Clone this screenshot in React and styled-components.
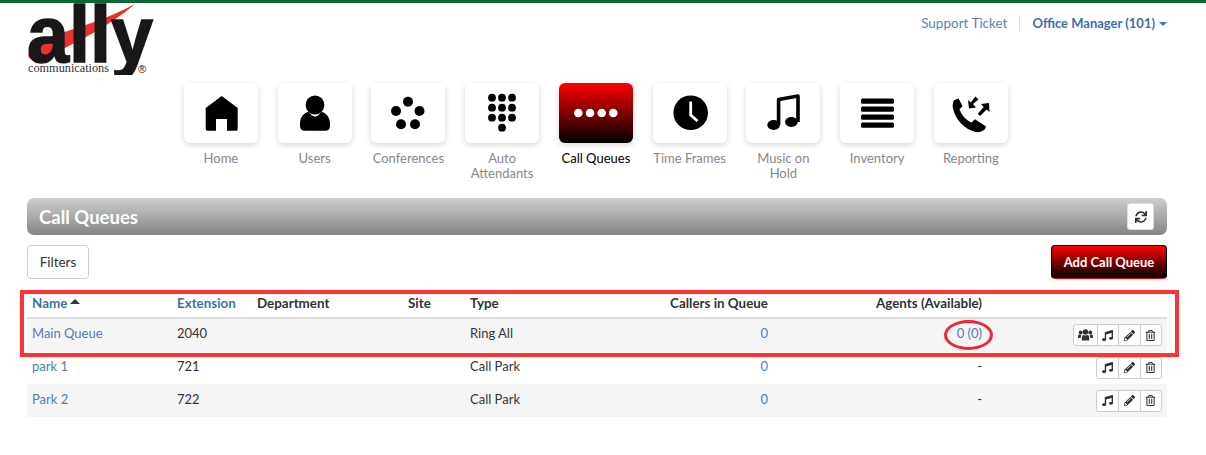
import React from "react";
import styled, { createGlobalStyle } from "styled-components";
import { FaMusic, FaPencilAlt, FaRegTrashAlt, FaSync } from "react-icons/fa";

const GlobalStyle = createGlobalStyle`
  html, body { margin: 0; padding: 0; background: #fff; }
  body { font-family: "Lato", "Noto Sans", sans-serif; font-size: 13px; color: #333; }
  * { box-sizing: border-box; }
`;

const navItems = [
  { label: "Home", icon: "home" },
  { label: "Users", icon: "users" },
  { label: "Conferences", icon: "conferences" },
  { label: "Auto Attendants", icon: "dialpad" },
  { label: "Call Queues", icon: "queues", active: true },
  { label: "Time Frames", icon: "clock" },
  { label: "Music on Hold", icon: "music" },
  { label: "Inventory", icon: "inventory" },
  { label: "Reporting", icon: "reporting" },
];

const queues = [
  { name: "Main Queue", extension: "2040", type: "Ring All", callers: "0", agents: "0 (0)", hasAgents: true },
  { name: "park 1", extension: "721", type: "Call Park", callers: "0", agents: "-" },
  { name: "Park 2", extension: "722", type: "Call Park", callers: "0", agents: "-" },
];

const dots = (points, r, fill = "#000") =>
  points.map(([cx, cy]) => <circle key={`${cx}-${cy}`} cx={cx} cy={cy} r={r} fill={fill} />);

const tileIcons = {
  home: <path d="M37.7 13 L53.7 25 V46 Q53.7 47.7 52 47.7 H43 V36 H32 V47.7 H23.4 Q21.7 47.7 21.7 46 V25 Z" />,
  users: (
    <>
      <circle cx="37" cy="22" r="9.4" />
      <path d="M22 41 C22 34 26 29.5 31 29 C33 32 35 33.5 37 33.5 C39 33.5 41 32 43 29 C48 29.5 52 34 52 41 V43 Q52 47.7 47 47.7 H27 Q22 47.7 22 43 Z" />
    </>
  ),
  conferences: dots([[37, 18.7], [25, 28], [48.5, 28], [30, 41.3], [44, 41.3]], 5),
  dialpad: dots(
    [[27, 14.7], [37, 14.7], [47, 14.7], [27, 24.7], [37, 24.7], [47, 24.7], [27, 34.7], [37, 34.7], [47, 34.7], [37, 44.7]],
    3.9
  ),
  queues: dots([[19.3, 30], [31, 30], [42.7, 30], [54.3, 30]], 4.3, "#fff"),
  clock: (
    <>
      <circle cx="37.7" cy="29.8" r="17.3" />
      <path d="M37.7 18.5 V32 L44.5 38" fill="none" stroke="#fff" strokeWidth="2.8" />
    </>
  ),
  music: (
    <>
      <ellipse cx="27.6" cy="42" rx="6.3" ry="5" />
      <ellipse cx="45.4" cy="39" rx="6.3" ry="5" />
      <path d="M32.6 42 V16.5 L52 13 V39" fill="none" stroke="#000" strokeWidth="3.6" strokeLinejoin="round" />
    </>
  ),
  inventory: (
    <>
      <rect x="21" y="15.5" width="33" height="5.2" rx="1.5" />
      <rect x="21" y="23.5" width="33" height="5.2" rx="1.5" />
      <rect x="21" y="31.5" width="33" height="5.2" rx="1.5" />
      <rect x="21" y="39.5" width="33" height="5.2" rx="1.5" />
    </>
  ),
  reporting: (
    <>
      <path d="M20.5 17 L24.5 15.5 L28.5 23 L25.5 26.5 C27.5 32 32 37 37.5 39.5 L41 36.2 L52 43.5 L51 46 C49 48.5 45 49.5 42 49 C31 46.5 21 37 18.8 24.5 C18.4 21 19 18.5 20.5 17 Z" />
      <path d="M35 25.5 L34 17 L36.7 19.4 L41.5 13.5 L44.5 16.5 L39 21 L42 24.5 Z" />
      <path d="M55 20 L55.5 29 L52.7 26.4 L46 33 L43.7 30.7 L49.7 24 L47 21 Z" />
    </>
  ),
};

const Logo = () => (
  <LogoSvg viewBox="0 0 127 72" aria-label="ally communications">
    <path d="M108 1 C 84 14, 54 24, 28 32 C 10 38, 0 46, 1.5 54 C 5 59, 14 57, 24 52 C 52 38, 84 22, 108 1 Z" fill="#e8322c" />
    <LogoWord x="0" y="59" textLength="126" lengthAdjust="spacingAndGlyphs">ally</LogoWord>
    <LogoTagline x="1" y="69" textLength="81" lengthAdjust="spacingAndGlyphs">communications</LogoTagline>
    <LogoMark x="111" y="70">®</LogoMark>
  </LogoSvg>
);

const GroupIcon = () => (
  <svg width="15" height="12" viewBox="0 0 15 12" fill="#333">
    <circle cx="7.5" cy="3" r="2.7" />
    <circle cx="2.7" cy="3.4" r="2" />
    <circle cx="12.3" cy="3.4" r="2" />
    <path d="M3.8 11.5 V8.5 C3.8 6.6 5 6 6 6 Q7.5 7 9 6 C10 6 11.2 6.6 11.2 8.5 V11.5 Z" />
    <path d="M0 9 V7.2 C0 6 .9 5.6 1.6 5.6 Q2.6 6.2 3.4 5.9 C3 6.6 2.8 7.5 2.8 9 Z" />
    <path d="M15 9 V7.2 C15 6 14.1 5.6 13.4 5.6 Q12.4 6.2 11.6 5.9 C12 6.6 12.2 7.5 12.2 9 Z" />
  </svg>
);

const App = () => (
  <Page>
    <GlobalStyle />
    <Header>
      <Logo />
      <UserLinks>
        <SupportLink>Support Ticket</SupportLink>
        <LinkDivider />
        <ManagerLink>Office Manager (101)</ManagerLink>
        <DownCaret />
      </UserLinks>
    </Header>

    <Nav>
      {navItems.map((item) => (
        <NavItem key={item.label}>
          <Tile $active={item.active}>
            <TileSvg viewBox="0 0 74 60">{tileIcons[item.icon]}</TileSvg>
          </Tile>
          <NavLabel $active={item.active}>{item.label}</NavLabel>
        </NavItem>
      ))}
    </Nav>

    <TitleBar>
      <Title>Call Queues</Title>
      <RefreshButton>
        <FaSync />
      </RefreshButton>
    </TitleBar>

    <Toolbar>
      <FilterButton>Filters</FilterButton>
      <AddButton>Add Call Queue</AddButton>
    </Toolbar>

    <TableWrap>
      <HeadRow>
        <HeadLink>
          Name
          <UpCaret />
        </HeadLink>
        <HeadLink>Extension</HeadLink>
        <HeadCell>Department</HeadCell>
        <HeadCell>Site</HeadCell>
        <HeadCell>Type</HeadCell>
        <HeadCell $right>Callers in Queue</HeadCell>
        <HeadCell $right>Agents (Available)</HeadCell>
        <HeadCell />
      </HeadRow>
      {queues.map((queue, index) => (
        <Row key={queue.name} $striped={index % 2 === 0}>
          <Cell>
            <RowLink>{queue.name}</RowLink>
          </Cell>
          <Cell>{queue.extension}</Cell>
          <Cell />
          <Cell />
          <Cell>{queue.type}</Cell>
          <RightCell>
            <RowLink>{queue.callers}</RowLink>
          </RightCell>
          <RightCell>{queue.hasAgents ? <RowLink>{queue.agents}</RowLink> : queue.agents}</RightCell>
          <ActionCell>
            <ActionGroup>
              {queue.hasAgents && (
                <ActionButton $wide>
                  <GroupIcon />
                </ActionButton>
              )}
              <ActionButton>
                <FaMusic />
              </ActionButton>
              <ActionButton>
                <FaPencilAlt />
              </ActionButton>
              <ActionButton>
                <FaRegTrashAlt />
              </ActionButton>
            </ActionGroup>
          </ActionCell>
        </Row>
      ))}
      <HighlightBox />
      <HighlightOval />
    </TableWrap>
  </Page>
);

const Page = styled.div`
  width: 1206px;
  height: 455px;
  padding: 0 39px 0 27px;
  border-top: 3px solid #0b6534;
  overflow: hidden;
`;

const Header = styled.header`
  display: flex;
  justify-content: space-between;
  align-items: flex-start;
  height: 80px;
`;

const LogoSvg = styled.svg`
  width: 127px;
  height: 72px;
  display: block;
`;

const LogoWord = styled.text`
  font-family: "Liberation Sans", sans-serif;
  font-weight: 700;
  font-size: 80px;
  fill: #1a1718;
  stroke: #1a1718;
  stroke-width: 1.6px;
`;

const LogoTagline = styled.text`
  font-family: "Liberation Serif", serif;
  font-size: 13px;
  fill: #333;
`;

const LogoMark = styled.text`
  font-family: "Liberation Sans", sans-serif;
  font-size: 11px;
  fill: #222;
`;

const UserLinks = styled.div`
  display: flex;
  align-items: center;
  height: 14px;
  margin-top: 13px;
`;

const SupportLink = styled.a`
  color: #5b80b4;
  font-size: 13.5px;
`;

const LinkDivider = styled.span`
  width: 1px;
  height: 15px;
  margin: 0 12px;
  background: #ddd;
`;

const ManagerLink = styled.a`
  color: #3f6fa8;
  font-weight: 700;
  font-size: 13px;
`;

const DownCaret = styled.span`
  width: 0;
  height: 0;
  margin-left: 4px;
  margin-top: 2px;
  border-left: 4px solid transparent;
  border-right: 4px solid transparent;
  border-top: 4px solid #337ab7;
`;

const Nav = styled.nav`
  display: flex;
  height: 115px;
  padding-left: 147px;
`;

const NavItem = styled.div`
  width: 93.75px;
  display: flex;
  flex-direction: column;
  align-items: center;
`;

const Tile = styled.div`
  width: 74px;
  height: 60px;
  border-radius: 6px;
  background: ${(props) => (props.$active ? "linear-gradient(to bottom, #f00, #000)" : "#fff")};
  box-shadow: 0 2px 6px rgba(0, 0, 0, 0.16);
`;

const TileSvg = styled.svg`
  display: block;
  width: 74px;
  height: 60px;
`;

const NavLabel = styled.div`
  margin-top: 8px;
  width: 80px;
  font-size: 13px;
  line-height: 15px;
  text-align: center;
  color: ${(props) => (props.$active ? "#000" : "#888")};
`;

const TitleBar = styled.div`
  display: flex;
  justify-content: space-between;
  align-items: center;
  height: 37px;
  padding: 0 13px 0 12px;
  border-radius: 7px;
  background: linear-gradient(to bottom, #cecece, #858585);
`;

const Title = styled.h2`
  margin: 0;
  font-size: 18.5px;
  font-weight: 700;
  color: #fff;
`;

const RefreshButton = styled.button`
  display: flex;
  align-items: center;
  justify-content: center;
  width: 27px;
  height: 27px;
  padding: 0;
  border: 1px solid #ddd;
  border-radius: 3px;
  background: #fff;
  color: #333;
  font-size: 12px;
`;

const Toolbar = styled.div`
  display: flex;
  justify-content: space-between;
  margin-top: 10px;
`;

const FilterButton = styled.button`
  width: 62px;
  height: 34px;
  padding: 0;
  border: 1px solid #ccc;
  border-radius: 4px;
  background: #fff;
  color: #333;
  font-family: inherit;
  font-size: 13.5px;
`;

const AddButton = styled.button`
  width: 116px;
  height: 34px;
  padding: 0 0 1px;
  border: 1px solid #000;
  border-bottom-color: #f00;
  border-radius: 4px;
  background: linear-gradient(to bottom, #f00, #000);
  color: #fff;
  font-family: inherit;
  font-size: 13px;
  font-weight: 700;
`;

const columns = "145px 80px 151px 62px 108px 200px 214px 180px";

const TableWrap = styled.div`
  position: relative;
  margin-top: 15px;
`;

const HeadRow = styled.div`
  display: grid;
  grid-template-columns: ${columns};
  align-items: center;
  height: 25px;
  padding-bottom: 6px;
  border-bottom: 2px solid #ddd;
  font-size: 13.4px;
  font-weight: 700;
`;

const HeadCell = styled.div`
  padding: 0 5px;
  text-align: ${(props) => (props.$right ? "right" : "left")};
`;

const HeadLink = styled.a`
  padding: 0 5px;
  color: #3f6fa8;
  display: flex;
  align-items: center;
`;

const UpCaret = styled.span`
  width: 0;
  height: 0;
  margin-left: 3px;
  margin-bottom: 3px;
  border-left: 5px solid transparent;
  border-right: 5px solid transparent;
  border-bottom: 5px solid #333;
`;

const Row = styled.div`
  display: grid;
  grid-template-columns: ${columns};
  align-items: center;
  height: 32.67px;
  background: ${(props) => (props.$striped ? "#f5f5f5" : "#fff")};
`;

const Cell = styled.div`
  padding: 0 5px 4px;
`;

const RowLink = styled.a`
  color: #4d7db8;
`;

const RightCell = styled(Cell)`
  display: flex;
  justify-content: flex-end;
`;

const ActionCell = styled.div`
  display: flex;
  justify-content: flex-end;
  padding-right: 5px;
`;

const ActionGroup = styled.div`
  display: flex;
  height: 22px;
  border: 1px solid #ccc;
  border-radius: 3px;
  background: #fff;
`;

const ActionButton = styled.div`
  display: flex;
  align-items: center;
  justify-content: center;
  width: ${(props) => (props.$wide ? "23px" : "21.5px")};
  color: #333;
  font-size: 11px;
  & + & {
    border-left: 1px solid #ccc;
  }
`;

const HighlightBox = styled.div`
  position: absolute;
  left: -7px;
  top: -4px;
  width: 1159px;
  height: 66.5px;
  border: 4px solid #ff3333;
`;

const HighlightOval = styled.div`
  position: absolute;
  left: 917px;
  top: 26px;
  width: 49px;
  height: 30px;
  border: 3px solid #ee2a30;
  border-radius: 50%;
`;

export default App;
